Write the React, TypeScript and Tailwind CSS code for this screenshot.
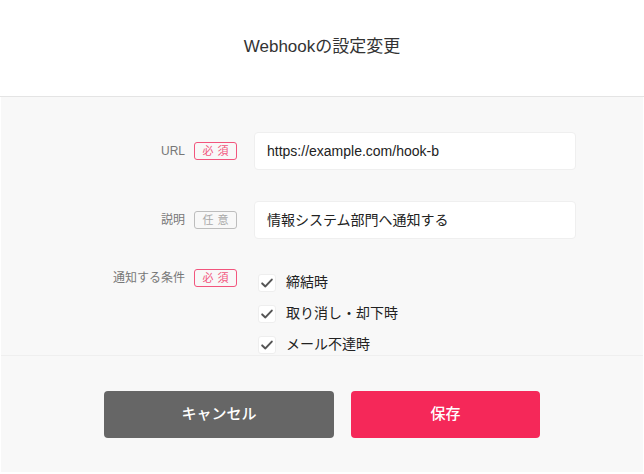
import React from 'react';

const font = { fontFamily: '"Liberation Sans", "Noto Sans CJK JP", sans-serif' };

const Badge: React.FC<{ required?: boolean }> = ({ required }) => (
  <span
    className={`flex h-[18px] w-[43px] items-center justify-center rounded-[3px] border-[1.5px] pl-[4px] text-[11px] tracking-[4px] ${
      required ? 'border-[#f2557d] text-[#f2557d]' : 'border-[#bdbdbd] text-[#a8a8a8]'
    }`}
  >
    {required ? '必須' : '任意'}
  </span>
);

const Label: React.FC<{ text: string; required?: boolean }> = ({ text, required }) => (
  <div className="flex w-[236px] shrink-0 items-center justify-end gap-[9px]">
    <span className="text-[12px] text-[#777]">{text}</span>
    <Badge required={required} />
  </div>
);

const Check: React.FC<{ label: string }> = ({ label }) => (
  <div className="flex h-[31px] items-center gap-[10px]">
    <span className="flex h-[18px] w-[18px] items-center justify-center rounded-[3px] border border-[#eeeeee] bg-white">
      <svg width="14" height="14" viewBox="0 0 14 14" fill="none">
        <path d="M2.2 7.4 L5.4 10.4 L11.8 3.6" stroke="#555" strokeWidth="2" strokeLinecap="round" strokeLinejoin="round" />
      </svg>
    </span>
    <span className="text-[14px] text-[#222]">{label}</span>
  </div>
);

const App: React.FC = () => {
  return (
    <div className="flex h-[474px] w-[644px] flex-col bg-white" style={font}>
      {/* Header */}
      <div className="flex h-[97px] shrink-0 items-center justify-center border-b border-[#e4e4e4]">
        <h1 className="pb-[3px] text-[17px] text-[#333]">Webhookの設定変更</h1>
      </div>

      <div className="mx-px mb-[2px] flex flex-1 flex-col bg-[#f8f8f8]">
        {/* Form */}
        <div className="h-[259px] shrink-0 overflow-hidden border-b border-[#efefef] pt-[35px]">
          <div className="flex items-center gap-[17px]">
            <Label text="URL" required />
            <div className="flex h-[38px] w-[322px] items-center rounded-[4px] border border-[#efefef] bg-white px-[12px] text-[14px] text-[#222]">
              https://example.com/hook-b
            </div>
          </div>
          <div className="mt-[31px] flex items-center gap-[17px]">
            <Label text="説明" />
            <div className="flex h-[38px] w-[322px] items-center rounded-[4px] border border-[#efefef] bg-white px-[12px] text-[14px] text-[#222]">
              情報システム部門へ通知する
            </div>
          </div>
          <div className="mt-[30px] flex items-start gap-[21px]">
            <Label text="通知する条件" required />
            <div className="-mt-[2px] flex flex-col">
              <Check label="締結時" />
              <Check label="取り消し・却下時" />
              <Check label="メール不達時" />
            </div>
          </div>
        </div>

        {/* Footer */}
        <div className="flex flex-1 justify-center gap-[17px] pt-[35px]">
          <button className="h-[47px] w-[230px] rounded-[4px] bg-[#666666] text-[15px] font-medium text-white">
            キャンセル
          </button>
          <button className="h-[47px] w-[189px] rounded-[4px] bg-[#f52859] text-[15px] font-medium text-white">
            保存
          </button>
        </div>
      </div>
    </div>
  );
};

export default App;
